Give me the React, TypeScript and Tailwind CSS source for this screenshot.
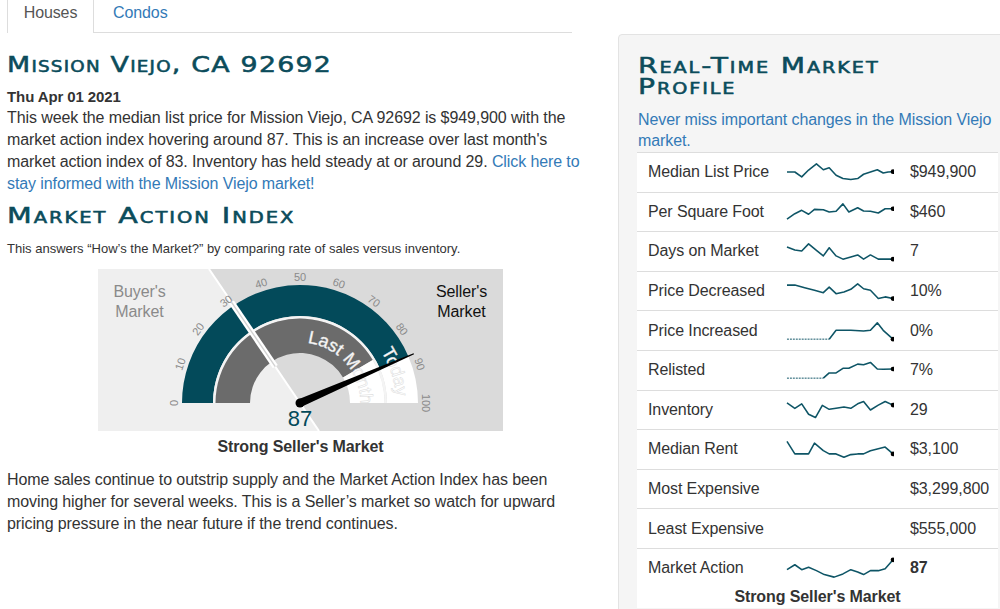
import React from 'react';

const TEAL = '#034a5a';
const CX = 202;
const CY = 134;

const pt = (v: number, r: number): [number, number] => {
  const a = Math.PI * (1 - v / 100);
  return [CX + r * Math.cos(a), CY - r * Math.sin(a)];
};

const sector = (v1: number, v2: number, r1: number, r2: number) => {
  const [ax, ay] = pt(v1, r2);
  const [bx, by] = pt(v2, r2);
  const [cx, cy] = pt(v2, r1);
  const [dx, dy] = pt(v1, r1);
  return `M${ax} ${ay} A${r2} ${r2} 0 0 1 ${bx} ${by} L${cx} ${cy} A${r1} ${r1} 0 0 0 ${dx} ${dy} Z`;
};

const arc = (v1: number, v2: number, r: number) => {
  const [ax, ay] = pt(v1, r);
  const [bx, by] = pt(v2, r);
  return `M${ax} ${ay} A${r} ${r} 0 0 1 ${bx} ${by}`;
};

function Gauge() {
  const ticks = [0, 10, 20, 30, 40, 50, 60, 70, 80, 90, 100];
  const a = Math.PI * (1 - 87 / 100);
  const u = [Math.cos(a), -Math.sin(a)];
  const n = [Math.sin(a), Math.cos(a)];
  const tip = [CX + u[0] * 124, CY + u[1] * 124];
  const needle = [
    [CX + n[0] * 4, CY + n[1] * 4],
    [tip[0] + n[0] * 0.6, tip[1] + n[1] * 0.6],
    [tip[0] - n[0] * 0.6, tip[1] - n[1] * 0.6],
    [CX - n[0] * 4, CY - n[1] * 4],
  ]
    .map((p) => p.join(','))
    .join(' ');
  const [g1x, g1y] = pt(31, 44);
  const [g2x, g2y] = pt(31, 122);

  return (
    <svg width="405" height="162" viewBox="0 0 405 162" className="block" style={{ fontFamily: '"Liberation Sans", Arial, sans-serif' }}>
      <polygon points="0,0 111,0 221,162 0,162" fill="#efefef" />
      <polygon points="111,0 405,0 405,162 221,162" fill="#dadada" />
      <line x1="111" y1="0" x2="221" y2="162" stroke="#fff" strokeWidth="2" />

      <path d={sector(0, 87, 87, 118)} fill={TEAL} />
      <path d={sector(87, 100, 87, 118)} fill="#fff" />
      <path d={sector(0, 100, 84.5, 87)} fill="#f4f4f4" />
      <path d={sector(0, 83, 50, 84.5)} fill="#6b6b6b" />
      <path d={sector(83, 100, 50, 84.5)} fill="#fff" />

      <line x1={g1x} y1={g1y} x2={g2x} y2={g2y} stroke="#fff" strokeWidth="6" />
      <line x1={g1x} y1={g1y} x2={g2x} y2={g2y} stroke="#d2d2d2" strokeWidth="1.4" />

      <defs>
        <path id="lastMonthArc" d={arc(54, 115, 60.5)} />
        <path id="todayArc" d={arc(82, 112, 96)} />
      </defs>
      <text fontSize="18" fill="#fff" stroke="#dcdcdc" strokeWidth="0.5">
        <textPath href="#lastMonthArc">Last Month</textPath>
      </text>
      <text fontSize="18" fill="#fff" stroke="#dcdcdc" strokeWidth="0.5">
        <textPath href="#todayArc">Today</textPath>
      </text>

      {ticks.map((t) => {
        const [x, y] = pt(t, 126);
        return (
          <text
            key={t}
            x={0}
            y={0}
            fontSize="11"
            fill="#8a8a8a"
            textAnchor="middle"
            dominantBaseline="central"
            transform={`translate(${x} ${y}) rotate(${t * 1.8 - 90})`}
          >
            {t}
          </text>
        );
      })}

      <text x="41.5" y="27.7" fontSize="16" fill="#8a8a8a" textAnchor="middle">Buyer's</text>
      <text x="41.5" y="47.7" fontSize="16" fill="#8a8a8a" textAnchor="middle">Market</text>
      <text x="363.5" y="27.7" fontSize="16" fill="#111" textAnchor="middle">Seller's</text>
      <text x="363.5" y="47.7" fontSize="16" fill="#111" textAnchor="middle">Market</text>

      <polygon points={needle} fill="#000" />
      <circle cx={CX} cy={CY} r="4.5" fill="#000" />
      <text x={CX} y="157" fontSize="22" fill={TEAL} textAnchor="middle">87</text>
    </svg>
  );
}

type Pt = [number, number];

function Spark({ data, flat = 0 }: { data: Pt[]; flat?: number }) {
  const last = data[data.length - 1];
  const head = flat > 0 ? data.slice(0, flat + 1) : [];
  const rest = flat > 0 ? data.slice(flat) : data;
  return (
    <svg width="108" height="30" viewBox="-1 0 110 30" className="block">
      {head.length > 0 && (
        <polyline points={head.map((p) => p.join(',')).join(' ')} fill="none" stroke="#0e5566" strokeWidth="1" strokeDasharray="2 1" />
      )}
      <polyline points={rest.map((p) => p.join(',')).join(' ')} fill="none" stroke="#0e5566" strokeWidth="1.6" strokeLinejoin="round" />
      <circle cx={last[0]} cy={last[1]} r="2.4" fill="#000" />
    </svg>
  );
}

const rows: { label: string; value: string; data?: Pt[]; flat?: number; bold?: boolean }[] = [
  {
    label: 'Median List Price',
    value: '$949,900',
    data: [[0, 15], [8, 15], [15, 20], [22, 13], [30, 6.7], [37, 12.7], [43, 10.7], [50, 18.3], [57, 21.7], [65, 22.7], [72, 21.7], [78, 17.3], [85, 15], [92, 12.7], [98, 16], [103, 15], [108, 14.7]],
  },
  {
    label: 'Per Square Foot',
    value: '$460',
    data: [[0, 22.3], [8, 16.7], [15, 13.3], [22, 17.3], [28, 12.3], [37, 12.7], [43, 15], [50, 14.3], [57, 6.7], [63, 15], [72, 10.7], [78, 14], [85, 14.3], [93, 16], [100, 11.7], [108, 11.7]],
  },
  {
    label: 'Days on Market',
    value: '7',
    data: [[0, 11], [8, 14], [15, 15], [22, 7.7], [30, 14.3], [37, 20], [43, 11.7], [50, 20], [57, 23.3], [65, 21], [72, 19], [78, 23.3], [85, 19], [93, 23.3], [100, 23.3], [108, 23.3]],
  },
  {
    label: 'Price Decreased',
    value: '10%',
    data: [[0, 9], [8, 9], [18, 11.7], [28, 14.3], [37, 16.7], [43, 11], [50, 17.7], [58, 16], [65, 13.3], [72, 7.7], [78, 12.7], [85, 14.3], [93, 22.7], [100, 21], [108, 22.7]],
  },
  {
    label: 'Price Increased',
    value: '0%',
    flat: 1,
    data: [[0, 23.3], [43, 23.3], [50, 14.3], [65, 14.3], [78, 15], [85, 14.3], [92, 6.7], [98, 14.3], [108, 23.3]],
  },
  {
    label: 'Relisted',
    value: '7%',
    flat: 1,
    data: [[0, 23.3], [37, 23.3], [43, 18], [50, 18], [57, 13.3], [63, 13.3], [72, 9], [78, 9.7], [85, 7.3], [92, 14], [98, 14.3], [108, 14]],
  },
  {
    label: 'Inventory',
    value: '29',
    data: [[0, 7.7], [8, 13.3], [15, 8.7], [22, 19.3], [29, 22.7], [36, 10.3], [43, 14.3], [50, 13.3], [58, 12], [65, 13.3], [72, 8.7], [78, 6.3], [85, 15], [93, 10], [100, 6.3], [108, 10]],
  },
  {
    label: 'Median Rent',
    value: '$3,100',
    data: [[0, 7.3], [8, 20], [22, 20], [28, 9], [37, 16.7], [43, 20], [50, 20], [58, 23.3], [65, 20.7], [72, 20], [78, 20], [85, 16.7], [93, 14.7], [100, 13], [108, 20]],
  },
  { label: 'Most Expensive', value: '$3,299,800' },
  { label: 'Least Expensive', value: '$555,000' },
];

const marketAction: Pt[] = [[0, 16.7], [8, 11.7], [15, 16.7], [22, 14.3], [30, 17.7], [38, 21.7], [48, 24.3], [57, 21], [65, 16.7], [72, 19], [78, 21.7], [85, 17.7], [93, 17.7], [100, 15.7], [108, 6.7]];

function Row({ label, value, data, flat, bold }: { label: string; value: string; data?: Pt[]; flat?: number; bold?: boolean }) {
  return (
    <div className="flex h-[38.6px] items-center">
      <div className="w-[149px] shrink-0 pl-[11px]">{label}</div>
      <div className="w-[108px] shrink-0">{data && <Spark data={data} flat={flat} />}</div>
      <div className={`ml-[16px] ${bold ? 'font-bold' : ''}`}>{value}</div>
    </div>
  );
}

export default function App() {
  const heading =
    "inline-block origin-left font-['DejaVu_Sans',sans-serif] [font-variant-caps:small-caps] text-[#0b4c5b] [-webkit-text-stroke:0.55px_#0b4c5b] whitespace-nowrap";
  return (
    <div className="flex h-[609px] w-[1000px] overflow-hidden bg-white font-['Liberation_Sans',Arial,sans-serif] text-[16px] leading-[22px] tracking-[-0.1px] text-[#333]">
      <div className="ml-[7px] w-[580px] shrink-0">
        <div className="flex h-[33px] w-[565px] border-b border-[#ddd]">
          <div className="-mb-px flex h-[33px] w-[87px] justify-center border-x border-[#ddd] bg-white pt-[2px] text-[#555]">Houses</div>
          <div className="pl-[19px] pt-[2px] text-[#337ab7]">Condos</div>
        </div>

        <div className="mt-[17px] h-[30px] text-[22px] leading-[30px]">
          <h1 className={`scale-x-[1.22] tracking-[1px] ${heading}`}>Mission Viejo, CA 92692</h1>
        </div>
        <div className="mt-[7px] text-[15px] font-bold leading-[20px]">Thu Apr 01 2021</div>
        <p>
          This week the median list price for Mission Viejo, CA 92692 is $949,900 with the market action index hovering around 87. This is an increase over last month's market action index of 83. Inventory has held steady at or around 29.{' '}
          <span className="text-[#337ab7]">Click here to stay informed with the Mission Viejo market!</span>
        </p>

        <div className="mt-[6px] h-[30px] text-[22px] leading-[30px]">
          <h2 className={`scale-x-[1.3] tracking-[1.5px] ${heading}`}>Market Action Index</h2>
        </div>
        <div className="mt-[9px] text-[13px] leading-[18px] tracking-normal">This answers “How’s the Market?” by comparing rate of sales versus inventory.</div>

        <div className="ml-[91px] mt-[11px] w-[405px]">
          <Gauge />
          <div className="mt-[5px] text-center font-bold">Strong Seller's Market</div>
        </div>

        <p className="mt-[11px] w-[565px]">
          Home sales continue to outstrip supply and the Market Action Index has been moving higher for several weeks. This is a Seller’s market so watch for upward pricing pressure in the near future if the trend continues.
        </p>
      </div>

      <div className="ml-[31px] mt-[34px] h-[620px] w-[400px] shrink-0 rounded-[4px] border border-[#e3e3e3] bg-[#f5f5f5] pl-[19px] pt-[20px]">
        <div className="flex flex-col text-[22px] leading-[21px]">
          <h2 className={`scale-x-[1.28] tracking-[1.5px] ${heading}`}>Real-Time Market</h2>
          <h2 className={`scale-x-[1.28] tracking-[1.5px] ${heading}`}>Profile</h2>
        </div>
        <div className="mt-[12px] leading-[21px] text-[#337ab7]">
          Never miss important changes in the Mission Viejo
          <br />
          market.
        </div>
        <div className="-ml-px mt-[1px] w-[361px] bg-white">
          {rows.map((r) => (
            <div key={r.label} className="border-t border-[#ddd]">
              <Row {...r} />
            </div>
          ))}
          <div className="border-t border-[#ddd]">
            <Row label="Market Action" value="87" data={marketAction} bold />
            <div className="-mt-[2px] text-center font-bold">Strong Seller's Market</div>
          </div>
        </div>
      </div>
    </div>
  );
}
